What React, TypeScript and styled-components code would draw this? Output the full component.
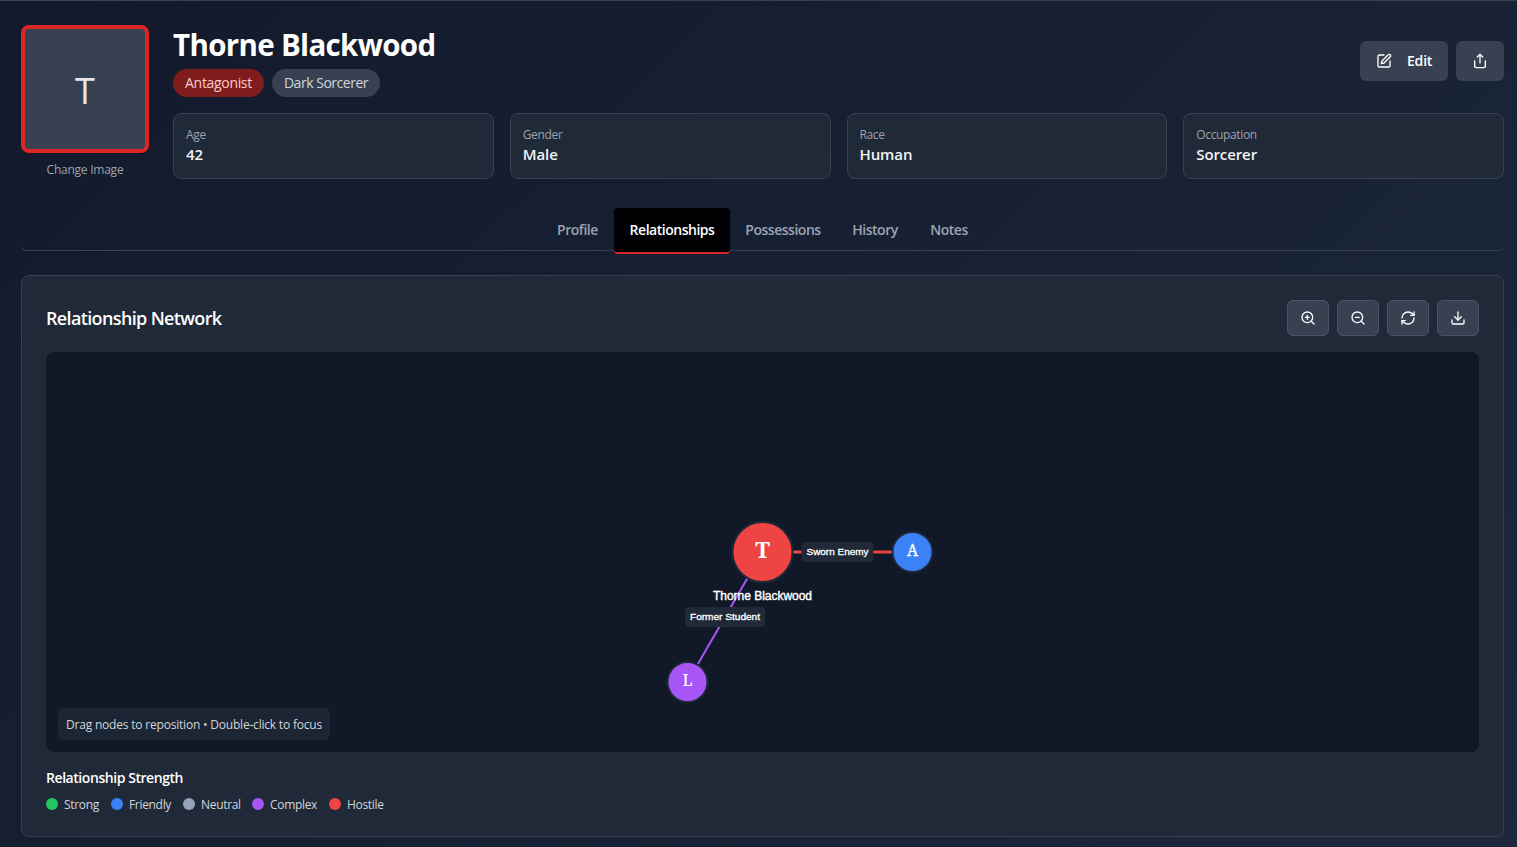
import React from "react";
import styled, { createGlobalStyle } from "styled-components";
import { Download, RefreshCw, Share, ZoomIn, ZoomOut } from "lucide-react";

const GlobalStyle = createGlobalStyle`
  *, *::before, *::after { box-sizing: border-box; }
  html, body { margin: 0; height: 100%; }
  body {
    overflow: hidden;
    font-family: "Segoe UI", "Open Sans", "Noto Sans", sans-serif;
    color: #fff;
    background: #131b2d;
  }
  h1, h2, h3, p { margin: 0; }
  button { font: inherit; color: inherit; border: 0; padding: 0; background: none; cursor: pointer; }
`;

const Page = styled.main`
  height: 847px;
  border-top: 1px solid #374151;
  padding: 24px 13px 0 21px;
  background: linear-gradient(135deg, #12192b 0%, #1d283c 100%);
`;

const Header = styled.header`
  display: flex;
  gap: 24px;
`;

const AvatarColumn = styled.div`
  width: 128px;
  display: flex;
  flex-direction: column;
  align-items: center;
`;

const Avatar = styled.div`
  width: 128px;
  height: 128px;
  border: 4px solid #dc2626;
  border-radius: 8px;
  background: #374151;
  color: #e5e7eb;
  display: flex;
  align-items: center;
  justify-content: center;
  padding-top: 4px;
  font-size: 36px;
  line-height: 40px;
`;

const ChangeImage = styled.button`
  margin-top: 9px;
  font-size: 12px;
  line-height: 16px;
  color: #9ca3af;
  letter-spacing: -0.24px;
`;

const Info = styled.div`
  flex: 1;
`;

const TitleRow = styled.div`
  display: flex;
  align-items: center;
  justify-content: space-between;
  height: 72px;
`;

const Name = styled.h1`
  height: 36px;
  padding-top: 1px;
  font-size: 29.5px;
  line-height: 37px;
  font-weight: 700;
  letter-spacing: -0.67px;
`;

const Chips = styled.div`
  display: flex;
  gap: 8px;
  margin-top: 8px;
`;

const Chip = styled.span<{ $danger?: boolean; $w: number }>`
  width: ${(p) => p.$w}px;
  height: 28px;
  border-radius: 14px;
  text-align: center;
  font-size: 14px;
  line-height: 28px;
  white-space: nowrap;
  letter-spacing: ${(p) => (p.$danger ? "-0.32px" : "-0.48px")};
  color: ${(p) => (p.$danger ? "#fecaca" : "#d1d5db")};
  background: ${(p) => (p.$danger ? "#7f1d1d" : "#374151")};
`;

const Actions = styled.div`
  display: flex;
  gap: 8px;
`;

const ActionButton = styled.button<{ $w: number }>`
  width: ${(p) => p.$w}px;
  height: 40px;
  padding: 0 0 0 16px;
  display: flex;
  align-items: center;
  gap: 15px;
  border-radius: 6px;
  background: #374151;
  font-size: 14px;
  line-height: 20px;
  font-weight: 600;
  letter-spacing: -0.2px;
`;

const Stats = styled.div`
  margin-top: 16px;
  display: grid;
  grid-template-columns: repeat(4, 1fr);
  gap: 16px;
`;

const Stat = styled.div`
  height: 66px;
  padding: 13px 12px 12px;
  border: 1px solid #374151;
  border-radius: 8px;
  background: #1f2937;
`;

const StatLabel = styled.div`
  font-size: 12px;
  line-height: 16px;
  color: #9ca3af;
  letter-spacing: -0.35px;
`;

const StatValue = styled.div`
  font-size: 15px;
  line-height: 22px;
  font-weight: 600;
  color: #f3f4f6;
  letter-spacing: -0.1px;
`;

const Tabs = styled.nav`
  height: 43px;
  margin-top: 29px;
  display: flex;
  justify-content: center;
  align-items: flex-start;
  border-bottom: 1px solid #374151;
  border-radius: 6px;
`;

const Tab = styled.button<{ $active?: boolean; $w: number }>`
  width: ${(p) => p.$w}px;
  height: 46px;
  border-radius: 4px;
  border-bottom: 2px solid ${(p) => (p.$active ? "#dc2626" : "transparent")};
  background: ${(p) => (p.$active ? "#000003" : "transparent")};
  color: ${(p) => (p.$active ? "#fff" : "#9ca3af")};
  font-size: 14px;
  line-height: 20px;
  font-weight: 600;
  letter-spacing: -0.48px;
  white-space: nowrap;
`;

const Panel = styled.section`
  height: 562px;
  margin-top: 24px;
  padding: 24px;
  border: 1px solid #374151;
  border-radius: 8px;
  background: #1f2937;
`;

const PanelHeader = styled.div`
  display: flex;
  align-items: center;
  justify-content: space-between;
`;

const PanelTitle = styled.h2`
  font-size: 18px;
  line-height: 28px;
  font-weight: 600;
  letter-spacing: -0.64px;
`;

const ToolButton = styled.button`
  width: 42px;
  height: 36px;
  display: flex;
  align-items: center;
  justify-content: center;
  border: 1px solid #4b5563;
  border-radius: 6px;
  background: #374151;
`;

const Network = styled.div`
  position: relative;
  height: 400px;
  margin-top: 16px;
  border-radius: 8px;
  overflow: hidden;
  background: #111827;
`;

const Graph = styled.svg`
  display: block;
`;

const Hint = styled.div`
  position: absolute;
  left: 12px;
  bottom: 12px;
  width: 272px;
  height: 32px;
  border-radius: 6px;
  background: rgba(31, 41, 55, 0.8);
  color: #d1d5db;
  text-align: center;
  font-size: 12px;
  line-height: 34px;
  letter-spacing: -0.2px;
  white-space: nowrap;
`;

const LegendTitle = styled.h3`
  margin-top: 16px;
  font-size: 14px;
  line-height: 20px;
  font-weight: 600;
  letter-spacing: -0.44px;
`;

const Legend = styled.div`
  display: flex;
  gap: 12px;
  margin-top: 8px;
`;

const LegendItem = styled.div<{ $w: number }>`
  width: ${(p) => p.$w}px;
  display: flex;
  align-items: center;
  gap: 6px;
  font-size: 12px;
  line-height: 16px;
  color: #d1d5db;
  letter-spacing: -0.32px;
  white-space: nowrap;
`;

const LegendLabel = styled.span`
  padding-top: 1px;
  margin-bottom: -1px;
`;

const Dot = styled.i<{ $color: string }>`
  flex: none;
  width: 12px;
  height: 12px;
  border-radius: 50%;
  background: ${(p) => p.$color};
`;

const stats = [
  ["Age", "42"],
  ["Gender", "Male"],
  ["Race", "Human"],
  ["Occupation", "Sorcerer"],
];

const tabs = [
  { label: "Profile", width: 73 },
  { label: "Relationships", width: 116, active: true },
  { label: "Possessions", width: 106 },
  { label: "History", width: 78 },
  { label: "Notes", width: 70 },
];

const legend = [
  { label: "Strong", color: "#22c55e", width: 53 },
  { label: "Friendly", color: "#3b82f6", width: 60 },
  { label: "Neutral", color: "#94a3b8", width: 57 },
  { label: "Complex", color: "#a855f7", width: 65 },
  { label: "Hostile", color: "#ef4444", width: 55 },
];

const tools = [ZoomIn, ZoomOut, RefreshCw, Download];

function EditIcon() {
  return (
    <svg
      width="16"
      height="16"
      viewBox="0 0 24 24"
      fill="none"
      stroke="currentColor"
      strokeWidth="2"
      strokeLinecap="round"
      strokeLinejoin="round"
    >
      <path d="M12 3H5a2 2 0 0 0-2 2v14a2 2 0 0 0 2 2h14a2 2 0 0 0 2-2v-7" />
      <path d="M18.375 2.625a2.121 2.121 0 1 1 3 3L12 15l-4 1 1-4Z" />
    </svg>
  );
}

function RelationshipGraph() {
  const sans = '"Liberation Sans", Arial, sans-serif';
  const serif = '"Noto Serif", "DejaVu Serif", serif';
  return (
    <Graph width="1433" height="400" viewBox="0 0 1433 400" textAnchor="middle" fill="#fff">
      <line x1="716.5" y1="200" x2="866.5" y2="200" stroke="#ef4444" strokeWidth="3" />
      <line x1="716.5" y1="200" x2="641.5" y2="330" stroke="#a855f7" strokeWidth="2" />
      <circle cx="716.5" cy="200" r="30" fill="#ef4444" stroke="#1f2937" strokeWidth="2" />
      <circle cx="866.5" cy="200" r="20" fill="#3b82f6" stroke="#1f2937" strokeWidth="2" />
      <circle cx="641.5" cy="330" r="20" fill="#a855f7" stroke="#1f2937" strokeWidth="2" />
      <text x="716.5" y="206" fontFamily={serif} fontSize="22.5" fontWeight="700">T</text>
      <text x="866.5" y="204" fontFamily={serif} fontSize="15.5" stroke="#fff" strokeWidth="0.3">A</text>
      <text x="641.5" y="334" fontFamily={serif} fontSize="15.5" stroke="#fff" strokeWidth="0.2">L</text>
      <text x="716.5" y="248" fontFamily={sans} fontSize="12" stroke="#fff" strokeWidth="0.4" textLength="99">Thorne Blackwood</text>
      <rect x="755.5" y="190" width="72" height="20" rx="4" fill="#1f2937" />
      <text x="791.5" y="203" fontFamily={sans} fontSize="9.5" stroke="#fff" strokeWidth="0.3" textLength="62" lengthAdjust="spacingAndGlyphs">Sworn Enemy</text>
      <rect x="639" y="255" width="80" height="20" rx="4" fill="#1f2937" />
      <text x="679" y="268" fontFamily={sans} fontSize="9.5" stroke="#fff" strokeWidth="0.3" textLength="70" lengthAdjust="spacingAndGlyphs">Former Student</text>
    </Graph>
  );
}

export default function App() {
  return (
    <>
      <GlobalStyle />
      <Page>
        <Header>
          <AvatarColumn>
            <Avatar>T</Avatar>
            <ChangeImage>Change Image</ChangeImage>
          </AvatarColumn>
          <Info>
            <TitleRow>
              <div>
                <Name>Thorne Blackwood</Name>
                <Chips>
                  <Chip $danger $w={91}>Antagonist</Chip>
                  <Chip $w={108}>Dark Sorcerer</Chip>
                </Chips>
              </div>
              <Actions>
                <ActionButton $w={88}>
                  <EditIcon />
                  Edit
                </ActionButton>
                <ActionButton $w={48} aria-label="Share">
                  <Share size={16} />
                </ActionButton>
              </Actions>
            </TitleRow>
            <Stats>
              {stats.map(([label, value]) => (
                <Stat key={label}>
                  <StatLabel>{label}</StatLabel>
                  <StatValue>{value}</StatValue>
                </Stat>
              ))}
            </Stats>
          </Info>
        </Header>
        <Tabs>
          {tabs.map((t) => (
            <Tab key={t.label} $active={t.active} $w={t.width}>{t.label}</Tab>
          ))}
        </Tabs>
        <Panel>
          <PanelHeader>
            <PanelTitle>Relationship Network</PanelTitle>
            <Actions>
              {tools.map((Icon, i) => (
                <ToolButton key={i}>
                  <Icon size={16} />
                </ToolButton>
              ))}
            </Actions>
          </PanelHeader>
          <Network>
            <RelationshipGraph />
            <Hint>Drag nodes to reposition • Double-click to focus</Hint>
          </Network>
          <LegendTitle>Relationship Strength</LegendTitle>
          <Legend>
            {legend.map((l) => (
              <LegendItem key={l.label} $w={l.width}>
                <Dot $color={l.color} />
                <LegendLabel>{l.label}</LegendLabel>
              </LegendItem>
            ))}
          </Legend>
        </Panel>
      </Page>
    </>
  );
}
